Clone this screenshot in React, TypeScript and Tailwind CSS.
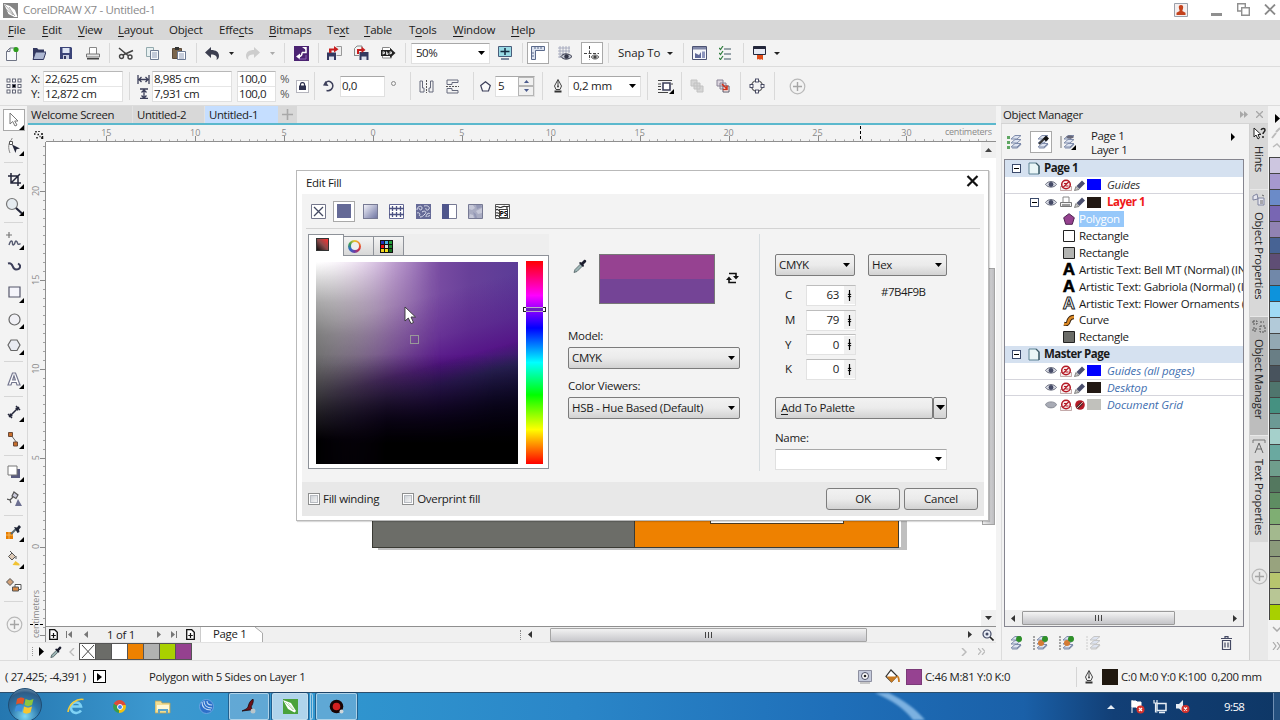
import React from "react";

type Kids = { children?: React.ReactNode };

/* ---------- small helpers ---------- */

function Svg({ w = 16, h = 16, vb, className = "", children }: { w?: number; h?: number; vb?: string; className?: string } & Kids) {
  return (
    <svg width={w} height={h} viewBox={vb ?? `0 0 ${w} ${h}`} className={`block shrink-0 ${className}`} fill="none">
      {children}
    </svg>
  );
}

function Slot({ w, children }: { w: string } & Kids) {
  return <div className={`flex h-full shrink-0 items-center justify-center ${w}`}>{children}</div>;
}

function VSep({ w, h = "h-[28px]" }: { w: string; h?: string }) {
  return (
    <Slot w={w}>
      <div className={`w-px bg-[#d9d9d9] ${h}`} />
    </Slot>
  );
}

function Down({ className = "text-black" }: { className?: string }) {
  return (
    <Svg w={7} h={4} className={className}>
      <path d="M0 0h7L3.5 4z" fill="currentColor" />
    </Svg>
  );
}

function Corner() {
  return (
    <Svg w={5} h={5} className="absolute bottom-0 right-0">
      <path d="M5 0v5H0z" fill="#000" />
    </Svg>
  );
}

const INK = "#3c3f5a";

/* ---------- title and menu ---------- */

function TitleBar() {
  return (
    <div className="flex h-5 shrink-0 items-center bg-white">
      <Svg w={15} h={15} className="ml-[3px]">
        <path d="M0 0h15v15H0z" fill="#858585" />
        <path d="M1 1l6 2 5 4 2.500 7-3 0-6-3z" fill="#fff" />
        <path d="M2 2l10 11M6 4l5 8M3 6l7 6" stroke="#9a9a9a" strokeWidth=".8" />
      </Svg>
      <span className="ml-[5px] text-[11.5px] tracking-[-0.33px] text-[#8b8b8b]">CorelDRAW X7 - Untitled-1</span>
      <div className="ml-auto flex items-center">
        <Svg w={14} h={14}>
          <path d="M.5.5h13v13H.5z" fill="#f4eeee" stroke="#9aa0ab" />
          <path d="M7 2c2 0 2.600 1.500 2 3.500L8.300 8l3.200 1.700V12h-9V9.700L5.700 8 5 5.500C4.400 3.500 5 2 7 2z" fill="#c4421d" />
        </Svg>
        <Svg w={11} h={14} className="ml-[23px]">
          <path d="M0 10h11v3H0z" fill="#8f8f8f" />
        </Svg>
        <Svg w={13} h={13} className="ml-[15px] -mt-[2px]">
          <path d="M4 8H.7V.7h7.600V4" stroke="#8f8f8f" strokeWidth="1.400" />
          <path d="M4.700 4.700h7.600v7.600H4.700z" stroke="#8f8f8f" strokeWidth="1.400" />
        </Svg>
        <Svg w={12} h={11} className="ml-[14px] mr-[4px] -mt-[2px]">
          <path d="M1 .5l10 10M11 .5l-10 10" stroke="#8a8a8a" strokeWidth="1.800" />
        </Svg>
      </div>
    </div>
  );
}

const MENUS: [string, string, string, string][] = [
  ["", "F", "ile", "w-[34px]"],
  ["", "E", "dit", "w-[36px]"],
  ["", "V", "iew", "w-[40px]"],
  ["", "L", "ayout", "w-[51px]"],
  ["Ob", "j", "ect", "w-[50px]"],
  ["Effe", "c", "ts", "w-[50px]"],
  ["", "B", "itmaps", "w-[58px]"],
  ["Te", "x", "t", "w-[37px]"],
  ["", "T", "able", "w-[45px]"],
  ["T", "o", "ols", "w-[44px]"],
  ["", "W", "indow", "w-[58px]"],
  ["", "H", "elp", "w-[40px]"],
];

function MenuBar() {
  return (
    <div className="flex h-5 shrink-0 items-center bg-[#d7d7d7] pl-[8px] text-[11.5px] tracking-[-0.2px]">
      {MENUS.map(([a, u, b, w]) => (
        <div key={a + u + b} className={`shrink-0 ${w}`}>
          {a}
          <span className="underline underline-offset-2">{u}</span>
          {b}
        </div>
      ))}
    </div>
  );
}

/* ---------- standard toolbar ---------- */

function FloppyWith({ out }: { out?: boolean }) {
  return (
    <Svg w={17} h={16}>
      {out ? (
        <>
          <path d="M7.500 7h9v8h-9z" fill="#33385f" />
          <path d="M9.500 11.500h5V15h-5z" fill="#dfe3ee" />
          <path d="M2.500 10V3.500L5 1h5v3M2 10.500h5" stroke="#888" />
          <path d="M5 4h4.500V1.500L13.500 5 9.500 8V6H7v3H5z" fill="#c81e1e" />
        </>
      ) : (
        <>
          <path d="M1 7.500h9V15H1z" fill="#33385f" />
          <path d="M3 11.500h5V15H3z" fill="#dfe3ee" />
          <path d="M10.500 1.500h5v9h-5" stroke="#999" fill="#eee" />
          <path d="M3 8V3.500h5V1l4.500 3.200L8 7.500v-2H5.500V8z" fill="#c81e1e" />
        </>
      )}
    </Svg>
  );
}

function StandardBar() {
  return (
    <div className="flex h-[27px] shrink-0 items-center border-b border-[#dcdcdc] bg-[#f3f3f3]">
      <Slot w="w-[25px]">
        <Svg w={13} h={15}>
          <path d="M.5 5.500L4 2h6.500v12.500H.5z" fill="#f7f8fb" stroke="#6f7485" />
          <path d="M.5 5.500H4V2" stroke="#6f7485" />
          <circle cx="10" cy="3.500" r="2.600" fill="#2f9e1f" />
        </Svg>
      </Slot>
      <Slot w="w-[28px]">
        <Svg w={14} h={13}>
          <path d="M1 12V1h4l1.500 1.500H12V5" fill="#33385f" />
          <path d="M1 12.500L3.500 5H14l-2.500 7.500z" fill="#aeb8d2" stroke="#33385f" />
        </Svg>
      </Slot>
      <Slot w="w-[26px]">
        <Svg w={12} h={12}>
          <path d="M0 0h11l1 1v11H0z" fill="#3b4478" />
          <path d="M2.500 1h7v5h-7z" fill="#dfe6f5" />
          <path d="M3 8h6v4H3z" fill="#c9cfe2" />
          <path d="M4 9h2v3H4z" fill="#33385f" />
        </Svg>
      </Slot>
      <Slot w="w-[27px]">
        <Svg w={14} h={13}>
          <path d="M3.500 7V.5h7V7" fill="#fff" stroke="#888" />
          <path d="M.5 7h13v3H.5z" fill="#e6e6e6" stroke="#777" />
          <path d="M1 11h12v1.500H1z" fill="#444" />
        </Svg>
      </Slot>
      <VSep w="w-[6px]" h="h-[20px]" />
      <Slot w="w-[27px]">
        <Svg w={16} h={13}>
          <path d="M1 1l9 7.500M15 3.500L5 8" stroke="#444" strokeWidth="1.600" />
          <circle cx="3.500" cy="9.500" r="2" stroke="#444" strokeWidth="1.400" />
          <circle cx="12" cy="10" r="2" stroke="#444" strokeWidth="1.400" />
        </Svg>
      </Slot>
      <Slot w="w-[26px]">
        <Svg w={13} h={13}>
          <path d="M.5.5h7v9h-7z" fill="#e7f0f1" stroke="#93a9ad" />
          <path d="M4.500 3.500h8v9h-8z" fill="#f4f7fb" stroke="#6d7a92" />
          <path d="M6 6h5M6 8h5M6 10h5" stroke="#8d9ab5" />
        </Svg>
      </Slot>
      <Slot w="w-[28px]">
        <Svg w={14} h={13}>
          <path d="M.5 1.500h9v10h-9z" fill="#7a654c" stroke="#5a4a3a" />
          <path d="M3 0h4v3H3z" fill="#333" />
          <path d="M5.500 4.500h8v8h-8z" fill="#fff" stroke="#6d7a92" />
          <path d="M7 7h5M7 9h5M7 11h5" stroke="#8d9ab5" />
        </Svg>
      </Slot>
      <VSep w="w-[6px]" h="h-[20px]" />
      <Slot w="w-[27px]">
        <Svg w={15} h={13}>
          <path d="M6 0v3c5 0 8 2 8 6 0 2-1 3-2.500 4 1-3 0-5.500-5.500-5.500V11L0 5.500z" fill="#3c3f50" />
        </Svg>
      </Slot>
      <Slot w="w-[10px]"><Svg w={5} h={3}><path d="M0 0h5L2.500 3z" fill="#222" /></Svg></Slot>
      <Slot w="w-[32px]">
        <Svg w={15} h={13}>
          <path d="M9 0v3C4 3 1 5 1 9c0 2 1 3 2.500 4C2.500 10 3.500 7.500 9 7.500V11l6-5.500z" fill="#cdcdcd" />
        </Svg>
      </Slot>
      <Slot w="w-[9px]"><Svg w={5} h={3}><path d="M0 0h5L2.500 3z" fill="#aaa" /></Svg></Slot>
      <VSep w="w-[14px]" h="h-[20px]" />
      <Slot w="w-[20px]">
        <Svg w={15} h={15}>
          <path d="M0 0h15v15H0z" fill="#4b2372" />
          <path d="M12 1v5.500H8M8 6.500c0 3-1 4-3 4" stroke="#fff" strokeWidth="1.500" />
          <path d="M2 10.500l4-3v6zM8 1l4 0v3z" fill="#fff" />
          <path d="M12 9v4H5" stroke="#8d63b5" />
        </Svg>
      </Slot>
      <VSep w="w-[14px]" h="h-[20px]" />
      <Slot w="w-[19px]"><FloppyWith /></Slot>
      <Slot w="w-[33px]"><FloppyWith out /></Slot>
      <Slot w="w-[22px]">
        <Svg w={16} h={14}>
          <path d="M2.500 12V1.500h7l2 2V12z" fill="#fff" stroke="#888" />
          <path d="M1 4h9V2l5.500 5L10 12v-2H1z" fill="#222" />
          <path d="M3 5.500v3M3 6h1.500v1.500H3M6.500 5.500v3M6.500 7h1.500v1.500H6.500M10 5.500v3M10 6h1.500v1.500H10" stroke="#fff" strokeWidth=".8" />
        </Svg>
      </Slot>
      <VSep w="w-[12px]" h="h-[20px]" />
      <div className="flex h-[21px] w-[79px] shrink-0 items-center border border-[#e0e0e0] border-t-[#a8a8a8] bg-white pl-[4px] text-[11.500px] tracking-[-0.5px]">
        50%
        <Down className="ml-auto mr-[4px] text-black" />
      </div>
      <Slot w="w-[29px]">
        <Svg w={14} h={14}>
          <path d="M.5.5h13v10H.5z" fill="#9adbe6" stroke="#4a5c7a" />
          <path d="M7 2v7M2.500 5.500h9" stroke="#14293f" strokeWidth="1.500" />
          <path d="M3 13h8" stroke="#4a5c7a" strokeWidth="1.400" />
        </Svg>
      </Slot>
      <VSep w="w-[6px]" h="h-[20px]" />
      <Slot w="w-[26px]">
        <div className="flex h-[22px] w-[22px] items-center justify-center border border-[#a9a9a9] bg-white">
          <Svg w={14} h={14}>
            <path d="M.5.5h13v4h-9v9h-4z" fill="#dce3f0" stroke="#5b6a8c" />
            <path d="M4 1v2M7 1v2M10 1v2M1 7h2M1 10h2" stroke="#5b6a8c" />
          </Svg>
        </div>
      </Slot>
      <Slot w="w-[28px]">
        <Svg w={16} h={15}>
          <path d="M1 2h12M1 5h12M1 8h8M1 11h4M3 0v12M6 0v9M9 0v8M12 0v7" stroke="#9aa0b5" strokeWidth=".8" />
          <path d="M4 10.500c2-3.500 8-3.500 11 0-3 3.500-9 3.500-11 0z" fill="#bfc3cf" stroke="#333648" />
          <circle cx="9.500" cy="10.500" r="2.200" fill="#333648" />
        </Svg>
      </Slot>
      <Slot w="w-[26px]">
        <div className="flex h-[22px] w-[22px] items-center justify-center border border-[#a9a9a9] bg-white">
          <Svg w={16} h={15}>
            <path d="M0 7.500h15M5.500 0v14" stroke="#444" strokeDasharray="3 1.500" />
            <path d="M7 11c2-2.800 6-2.800 8 0-2 2.800-6 2.800-8 0z" fill="#bbb" stroke="#555" strokeWidth=".8" />
            <circle cx="11" cy="11" r="1.600" fill="#444" />
          </Svg>
        </div>
      </Slot>
      <VSep w="w-[6px]" h="h-[20px]" />
      <div className="w-[50px] shrink-0 whitespace-nowrap pl-[7px] text-[11.500px] tracking-[-0.1px]">Snap To</div>
      <Slot w="w-[17px]"><Svg w={6} h={3}><path d="M0 0h6L3 3z" fill="#222" /></Svg></Slot>
      <VSep w="w-[10px]" h="h-[20px]" />
      <Slot w="w-[22px]">
        <Svg w={15} h={14}>
          <path d="M.5.5h14v13H.5z" fill="#f6f7fb" stroke="#4c5273" />
          <path d="M1 1h13v2.500H1z" fill="#8087a8" />
          <path d="M3 12V7l4 2 2-3v6z" fill="#5f6899" /><path d="M10 5.500h3V12h-3z" fill="#8d95bd" />
        </Svg>
      </Slot>
      <Slot w="w-[29px]">
        <Svg w={12} h={14}>
          <path d="M0 2l1.500 1.500L4 0M0 7l1.500 1.500L4 5M0 12l1.500 1.500L4 10" stroke="#2f7d3c" strokeWidth="1.200" />
          <path d="M5 3h7M5 8h7M5 13h7" stroke="#7b8a93" strokeWidth="1.500" />
        </Svg>
      </Slot>
      <VSep w="w-[8px]" h="h-[20px]" />
      <Slot w="w-[24px]">
        <Svg w={13} h={14}>
          <path d="M.5.5h12v8H.5z" fill="#e6e9f3" stroke="#23263a" />
          <path d="M.5.5h12V3H.5z" fill="#23263a" />
          <path d="M4 9h6v5l-2-1-1 1-1-1-2 .5z" fill="#df4b18" />
        </Svg>
      </Slot>
      <Slot w="w-[12px]"><Svg w={6} h={3}><path d="M0 0h6L3 3z" fill="#222" /></Svg></Slot>
    </div>
  );
}

/* ---------- property bar ---------- */

function Pair({ w, a, b }: { w: string; a: string; b: string }) {
  return (
    <div className={`flex h-[31px] shrink-0 flex-col border border-[#e0e0e0] border-t-[#b8b8b8] bg-white text-[11.500px] tracking-[-0.4px] ${w}`}>
      <div className="flex flex-1 items-center whitespace-nowrap border-b border-[#e6e6e6] pl-px">{a}</div>
      <div className="flex flex-1 items-center whitespace-nowrap pl-px">{b}</div>
    </div>
  );
}

function PropertyBar() {
  return (
    <div className="flex h-[39px] shrink-0 items-center border-b border-[#dcdcdc] bg-[#f3f3f3] text-[11.500px] tracking-[-0.35px]">
      <Slot w="w-[27px]">
        <Svg w={16} h={16}>
          {[1, 6.5, 12].map((x) => [1, 6.5, 12].map((y) => (
            <rect key={`${x}${y}`} x={x} y={y} width="3" height="3" fill={x === 6.5 && y === 6.5 ? "#000" : "#fff"} stroke="#55596b" strokeWidth=".9" />
          )))}
        </Svg>
      </Slot>
      <div className="flex h-[30px] w-[16px] shrink-0 flex-col pl-[4px]">
        <div className="flex flex-1 items-center">X:</div>
        <div className="flex flex-1 items-center">Y:</div>
      </div>
      <Pair w="w-[80px]" a="22,625 cm" b="12,872 cm" />
      <VSep w="w-[12px]" />
      <Slot w="w-[17px]">
        <Svg w={13} h={26} className="mr-[1px]">
          <path d="M1 2v9M12 2v9M2 6.500h9M4.500 4L2 6.500 4.500 9M8.500 4L11 6.500 8.500 9" stroke={INK} strokeWidth="1.300" />
          <path d="M3 16h8M3 25.500h8M7 17v8M4.500 19.500L7 17l2.500 2.500M4.500 22.500L7 25l2.500-2.500" stroke={INK} strokeWidth="1.300" />
        </Svg>
      </Slot>
      <Pair w="w-[80px]" a="8,985 cm" b="7,931 cm" />
      <div className="w-[5px]" />
      <Pair w="w-[39px]" a="100,0" b="100,0" />
      <div className="flex h-[30px] w-[17px] shrink-0 flex-col pl-[4px] text-[#555]">
        <div className="flex flex-1 items-center">%</div>
        <div className="flex flex-1 items-center">%</div>
      </div>
      <Slot w="w-[19px]">
        <div className="flex h-[13px] w-[13px] items-center justify-center border border-[#b5b5bd] bg-white">
          <Svg w={7} h={8}>
            <path d="M0 3.500h7V8H0z" fill="#2e3150" />
            <path d="M1.500 4V2.200C1.500 0 5.500 0 5.500 2.200V4" stroke="#2e3150" strokeWidth="1.200" />
          </Svg>
        </div>
      </Slot>
      <VSep w="w-[4px]" />
      <Slot w="w-[24px]">
        <Svg w={11} h={12}>
          <path d="M2.500 3C6-1 11 3 9.500 7.500 8.500 10 6 11 3.500 10.500" stroke={INK} strokeWidth="1.500" />
          <path d="M0 5.500L5.500 6 2.500 1z" fill={INK} />
        </Svg>
      </Slot>
      <div className="flex h-[21px] w-[45px] shrink-0 items-center border border-[#e0e0e0] border-t-[#a8a8a8] bg-white pl-px">0,0</div>
      <Slot w="w-[16px]"><div className="mb-[5px] h-[5px] w-[5px] rounded-full border border-[#888]" /></Slot>
      <VSep w="w-[18px]" />
      <Slot w="w-[14px]">
        <Svg w={15} h={13}>
          <path d="M7.500 0v13" stroke="#555" strokeDasharray="2 1" />
          <path d="M1 1v11h4V8H3.500V1zM14 1v11h-4V8h1.500V1z" stroke="#666a7c" />
        </Svg>
      </Slot>
      <Slot w="w-[38px]">
        <Svg w={13} h={15}>
          <path d="M0 7.500h13" stroke="#555" strokeDasharray="2 1" />
          <path d="M12 1H1v4.500h5V3.500h6zM12 14H1V9.500h5v2h6z" stroke="#666a7c" />
        </Svg>
      </Slot>
      <VSep w="w-[4px]" />
      <Slot w="w-[20px]">
        <Svg w={11} h={11}>
          <path d="M5.500.7l4.800 3.700-1.800 5.600H2.500L.7 4.400z" fill="#fafafa" stroke={INK} strokeWidth="1.200" />
        </Svg>
      </Slot>
      <div className="flex h-[21px] w-[40px] shrink-0 items-center border border-[#e0e0e0] border-t-[#a8a8a8] bg-white pl-[2px]">
        5
        <div className="ml-auto flex h-[19px] w-[16px] flex-col">
          {[0, 1].map((i) => (
            <div key={i} className="flex flex-1 items-center justify-center border border-[#b5b5b5] bg-[#f0f0f0]">
              <Svg w={5} h={3} className={i === 0 ? "rotate-180" : ""}><path d="M0 0h5L2.500 3z" fill="#4a5a8c" /></Svg>
            </div>
          ))}
        </div>
      </div>
      <VSep w="w-[15px]" />
      <Slot w="w-[16px]"><Nib /></Slot>
      <div className="ml-[2px] flex h-[21px] w-[73px] shrink-0 items-center border border-[#e0e0e0] border-t-[#a8a8a8] bg-white pl-[4px] tracking-[-0.25px]">
        0,2 mm
        <Down className="ml-auto mr-[4px] text-black" />
      </div>
      <VSep w="w-[12px]" />
      <Slot w="w-[25px]">
        <div className="relative">
          <Svg w={16} h={15}>
            <path d="M0 1.500h14M0 13.500h10M0 5h3M0 7.500h3M0 10.500h3M13 5h2" stroke="#444" />
            <path d="M5 4h7v7H5z" fill="#fff" stroke={INK} strokeWidth="1.600" />
          </Svg>
          <Corner />
        </div>
      </Slot>
      <VSep w="w-[7px]" />
      <Slot w="w-[24px]">
        <Svg w={14} h={14}>
          <path d="M1 1h6v6H1zM4 4h6v6H4zM7 7h6v6H7z" fill="#d6d6d6" stroke="#c2c2c2" />
        </Svg>
      </Slot>
      <Slot w="w-[28px]">
        <Svg w={14} h={14}>
          <path d="M1 1h6v6H1zM4 4h6v6H4z" fill="#ddd6e0" stroke="#8a8496" />
          <path d="M7 7h6v6H7z" fill="#fff" stroke="#5c5666" />
          <path d="M6 5l5 5M11 6.500v4H7" stroke="#d3321b" strokeWidth="1.600" />
        </Svg>
      </Slot>
      <VSep w="w-[7px]" />
      <Slot w="w-[25px]">
        <Svg w={16} h={16}>
          <circle cx="8" cy="8" r="5.500" stroke="#555" strokeWidth="1.200" />
          {[[8, 2.500], [13.500, 8], [8, 13.500], [2.500, 8]].map(([x, y]) => (
            <rect key={`${x}-${y}`} x={x - 1.500} y={y - 1.500} width="3" height="3" fill="#fff" stroke={INK} strokeWidth=".9" />
          ))}
        </Svg>
      </Slot>
      <VSep w="w-[10px]" />
      <Slot w="w-[36px]"><Plus /></Slot>
    </div>
  );
}

function Nib() {
  return (
    <Svg w={10} h={14}>
      <path d="M5 .5L8.500 7 7 10.500H3L1.500 7zM5 1v6" stroke="#444" />
      <circle cx="5" cy="7.500" r="1" fill="#444" />
      <path d="M1.500 11.500h7v2h-7z" fill="#333" />
    </Svg>
  );
}

function Plus() {
  return (
    <Svg w={17} h={17}>
      <circle cx="8.500" cy="8.500" r="7.300" stroke="#b9b9b9" strokeWidth="1.200" />
      <path d="M8.500 4v9M4 8.500h9" stroke="#a5a5a5" strokeWidth="1.400" />
    </Svg>
  );
}

/* ---------- toolbox ---------- */

function Tool({ h, corner = true, active, children }: { h: string; corner?: boolean; active?: boolean } & Kids) {
  return (
    <div className={`flex w-full shrink-0 items-center justify-center pl-px ${h}`}>
      <div className={`relative flex items-center justify-center ${active ? "h-[22px] w-[22px] border border-[#a9a9a9] bg-white" : "h-[20px] w-[20px]"}`}>
        {children}
        {corner && <Corner />}
      </div>
    </div>
  );
}

function HSep({ h }: { h: string }) {
  return (
    <div className={`flex w-full shrink-0 items-center pl-[4px] pr-[4px] ${h}`}>
      <div className="h-px w-full bg-[#d6d6d6]" />
    </div>
  );
}

function ToolBox() {
  return (
    <div className="flex w-[28px] shrink-0 flex-col border-r border-[#d8d8d8] bg-[#f3f3f3] pt-px">
      <Tool h="h-[25px]" active>
        <Svg w={10} h={15}><path d="M1 1v11l2.700-2.500L6 14l2-1-2.300-4H9z" fill="#fff" stroke="#777" /></Svg>
      </Tool>
      <Tool h="h-[28px]">
        <Svg w={14} h={16}>
          <path d="M5 0v1C1 5 1 10 3 15" stroke="#888" />
          <path d="M2.500 3.500h3v3h-3z" fill="#fff" stroke="#555" />
          <path d="M5 6.500l8 4-3.500.8L8.500 15z" fill="#23263a" />
        </Svg>
      </Tool>
      <HSep h="h-[5px]" />
      <Tool h="h-[28px]">
        <Svg w={15} h={15}><path d="M1 4h10v10M4 1v10h10M4 11l9-9" stroke="#23263a" strokeWidth="1.500" /></Svg>
      </Tool>
      <Tool h="h-[26px]">
        <Svg w={18} h={18}>
          <circle cx="7" cy="7" r="5.500" fill="#e5ebf0" stroke="#777" strokeWidth="1.200" />
          <path d="M11 11l6 5.500" stroke="#23263a" strokeWidth="2.200" />
        </Svg>
      </Tool>
      <HSep h="h-[6px]" />
      <Tool h="h-[30px]">
        <Svg w={16} h={16}>
          <path d="M3 0v6M0 3h6" stroke="#777" strokeWidth="1.200" />
          <path d="M3 13c2-6 3.500-4 3.500-1.500s2 1.500 2.500-1 2-1.500 2.500.5 2 1.500 3 .5" stroke="#555a70" strokeWidth="1.400" />
        </Svg>
      </Tool>
      <Tool h="h-[22px]" corner={false}>
        <Svg w={14} h={9}><path d="M1 1.500c6-1.500 3.500 6 8 6s5.500-4 2-6" stroke={INK} strokeWidth="2" /></Svg>
      </Tool>
      <Tool h="h-[31px]"><Svg w={13} h={13}><path d="M1 1h11v10H1z" fill="#f5f5fb" stroke="#55576b" strokeWidth="1.200" /></Svg></Tool>
      <Tool h="h-[22px]"><Svg w={13} h={13}><circle cx="6.500" cy="6.500" r="5.500" fill="#f0f0f5" stroke="#666" strokeWidth="1.200" /></Svg></Tool>
      <Tool h="h-[30px]"><Svg w={14} h={13}><path d="M4 1h6l3 5-3 5.500H4L1 6z" fill="#e9ebf2" stroke="#666" strokeWidth="1.200" /></Svg></Tool>
      <HSep h="h-[3px]" />
      <Tool h="h-[32px]">
        <Svg w={14} h={14}><path d="M1 13L5.500 1h3L13 13h-3l-.8-2.500H4.800L4 13zM5.700 8h2.600L7 3.800z" fill="#fff" stroke="#74778f" strokeWidth="1.200" /></Svg>
      </Tool>
      <HSep h="h-[3px]" />
      <Tool h="h-[28px]">
        <Svg w={14} h={14}><path d="M2 12L12 2M1 9l4 4M9 1l4 4" stroke="#23263a" strokeWidth="1.500" /><path d="M2 12l1-4 3 3zM12 2L8 3l3 3z" fill="#23263a" /></Svg>
      </Tool>
      <Tool h="h-[26px]">
        <Svg w={12} h={16}><path d="M3 4l6 8" stroke="#666" /><path d="M.5 1.500H4.500V5.500H.5zM5.500 11h4v4h-4z" fill="#c96f2b" stroke="#6a4a3a" /></Svg>
      </Tool>
      <HSep h="h-[6px]" />
      <Tool h="h-[28px]">
        <Svg w={14} h={14}><path d="M4 4h9v9H4z" fill="#5a5c80" /><path d="M1 1h9v9H1z" fill="#fff" stroke="#777" /></Svg>
      </Tool>
      <Tool h="h-[26px]" corner={false}>
        <Svg w={15} h={16}>
          <path d="M7 1l4 3-2 3.500L5 5z" fill="#ccd" stroke="#555" strokeWidth="1.200" />
          <path d="M6 6L3 9M0 8l3 1 1 3" stroke="#555" strokeWidth="1.200" />
          <path d="M11 8l4 7H8z" fill="#6c6f91" />
        </Svg>
      </Tool>
      <HSep h="h-[6px]" />
      <Tool h="h-[28px]">
        <Svg w={17} h={16} className="-ml-[2px]">
          <path d="M1 8h7v7H1z" fill="#e77d00" /><path d="M4 8v7M1 11h7" stroke="#f7b556" />
          <path d="M6 10l5-5" stroke="#5a6a70" strokeWidth="2" /><path d="M9 3l3 .5L14 1l2 2-2 2.500.5 2.500-2 1z" fill="#1f2536" />
        </Svg>
      </Tool>
      <Tool h="h-[26px]">
        <Svg w={15} h={16}>
          <path d="M5 2l3.500 3.500L5 9 1.500 5.500z" fill="#ddc9b6" stroke="#555" /><path d="M3 0l3 3M9 5v3" stroke="#555" /><path d="M5.500 14l3-4 4 3v1.500z" fill="#f1c232" />
        </Svg>
      </Tool>
      <Tool h="h-[26px]" corner={false}>
        <Svg w={16} h={16}>
          <path d="M4 1.500l3.500 3.500L4 8.500.5 5z" fill="#d1a078" stroke="#555" />
          <path d="M9 7.500h6v5H9z" fill="#fff" stroke="#555" /><path d="M6.500 10h6v4h-6z" fill="#d88a45" stroke="#555" />
        </Svg>
      </Tool>
      <HSep h="h-[6px]" />
      <Tool h="h-[40px]" corner={false}><Plus /></Tool>
    </div>
  );
}

/* ---------- rulers ---------- */

const UNIT = 8.89;

function HRuler() {
  const ticks = Array.from({ length: 107 }, (_, i) => i - 36);
  return (
    <Svg w={968} h={17} className="bg-[#f3f3f3]">
      <g>
        {ticks.map((n) => {
          const x = Math.round(345 + n * UNIT) + 0.5;
          if (x < 18 || x > 966) return null;
          const big = n % 10 === 0;
          return <path key={n} d={`M${x} ${big ? 11 : n % 2 === 0 ? 14 : 14.500}V16`} stroke={big ? "#8a8a8a" : "#a8a8a8"} />;
        })}
        {[-15, -10, -5, 0, 5, 10, 15, 20, 25, 30].map((n) => (
          <text key={n} x={345 + n * 2 * UNIT} y="10.500" textAnchor="middle" fontSize="9" fill="#8a8a8a">{Math.abs(n)}</text>
        ))}
        <text x="917" y="10" fontSize="9" fill="#8a8a8a" textLength="47">centimeters</text>
      </g>
      <path d="M832.500 1v15" stroke="#000" strokeDasharray="3 2" />
      <path d="M18 16.500h950" stroke="#8f8f8f" />
      <path d="M8 6v1.500M11 6v1M6 9h1.500M13 9h2M9.500 9.500h1.500M9 12v1.500M13 13h2M14.500 11v3M11.500 11.500h1" stroke="#111" strokeWidth="1.500" />
    </Svg>
  );
}

function VRuler() {
  const ticks = Array.from({ length: 60 }, (_, i) => i - 11);
  return (
    <Svg w={18} h={500} className="bg-[#f3f3f3]">
      {ticks.map((n) => {
        const y = Math.round(404.500 - n * UNIT) + 0.5;
        if (y < 0 || y > 498) return null;
        const big = n % 10 === 0;
        return <path key={n} d={`M${big ? 12 : 15} ${y}H17`} stroke={big ? "#8a8a8a" : "#a0a0a0"} />;
      })}
      {[0, 5, 10, 15, 20].map((n) => (
        <text key={n} transform={`translate(11 ${404.500 - n * 2 * UNIT}) rotate(-90)`} textAnchor="middle" fontSize="9" fill="#8a8a8a">{n}</text>
      ))}
      <text transform="translate(11 496) rotate(-90)" fontSize="9" fill="#8a8a8a" textLength="48">centimeters</text>
      <path d="M17.500 0v500" stroke="#8f8f8f" />
      <path d="M2 482.500h14" stroke="#000" strokeDasharray="3 2" />
    </Svg>
  );
}

/* ---------- document area ---------- */

function DocTabs() {
  return (
    <div className="flex h-[17px] shrink-0 items-stretch bg-[#e8e8e8] text-[11.400px] tracking-[-0.35px]">
      <div className="flex w-[105px] items-center border-r border-[#e2e2e2] bg-[#d8d8d8] pl-[3px]">Welcome Screen</div>
      <div className="flex w-[72px] items-center border-r border-[#e2e2e2] bg-[#d8d8d8] pl-[4px]">Untitled-2</div>
      <div className="flex w-[73px] items-center bg-[#c5deff] pl-[4px]">Untitled-1</div>
      <div className="flex w-[19px] items-center justify-center bg-[#d8d8d8]">
        <Svg w={11} h={11}><path d="M5.500 0v11M0 5.500h11" stroke="#a8a8a8" strokeWidth="1.600" /></Svg>
      </div>
    </div>
  );
}

function Arrow({ className = "" }: { className?: string }) {
  return (
    <Svg w={4} h={7} className={className}>
      <path d="M0 0l4 3.500L0 7z" fill="currentColor" />
    </Svg>
  );
}

function PageNav() {
  const addPage = (
    <Svg w={9} h={11}>
      <path d="M.7.7h5l2.600 2.600v7H.7z" fill="#fff" stroke="#111" strokeWidth="1.300" />
      <path d="M4.500 4v5M2.300 6.500h4.500" stroke="#111" strokeWidth="1.200" />
    </Svg>
  );
  return (
    <div className="flex h-[16px] shrink-0 items-center border-t border-[#8f8f8f] bg-[#f0f0f0] text-[11.400px] tracking-[-0.3px]">
      <Slot w="w-[14px]">{addPage}</Slot>
      <Slot w="w-[18px]">
        <div className="flex items-center"><div className="h-[7px] w-px bg-[#777]" /><Arrow className="ml-px rotate-180 text-[#777]" /></div>
      </Slot>
      <Slot w="w-[16px]"><Arrow className="rotate-180 text-[#777]" /></Slot>
      <Slot w="w-[54px]">1 of 1</Slot>
      <Slot w="w-[22px]"><Arrow className="text-[#777]" /></Slot>
      <Slot w="w-[8px]">
        <div className="flex items-center"><Arrow className="text-[#777]" /><div className="ml-px h-[7px] w-px bg-[#777]" /></div>
      </Slot>
      <Slot w="w-[24px]">{addPage}</Slot>
      <div className="relative ml-[-2px] flex h-full w-[63px] shrink-0 items-center border-l border-[#ccc] bg-white pb-[2px] pl-[12px]">
        Page 1
        <Svg w={8} h={15} className="absolute right-0 top-0"><path d="M0 0l7.500 6v9H8V0z" fill="#f0f0f0" /><path d="M0 0l7.500 6v9" stroke="#aaa" /></Svg>
      </div>
      <div className="ml-auto flex h-full w-[479px] items-center">
        <Slot w="w-[6px]"><div className="h-[10px] border-l border-dotted border-[#888]" /></Slot>
        <Slot w="w-[14px]"><Arrow className="rotate-180 text-[#333]" /></Slot>
        <div className="ml-[13px] flex h-[14px] w-[317px] items-center justify-center rounded-[1px] border border-[#a5a5a5] bg-gradient-to-b from-[#f2f2f2] to-[#c8c8cc]"><Grip /></div>
        <div className="ml-auto flex items-center">
          <Slot w="w-[18px]"><Arrow className="text-[#333]" /></Slot>
          <Slot w="w-[17px]">
            <Svg w={12} h={12}>
              <circle cx="5" cy="5" r="4" fill="#e8ecf5" stroke="#444b66" strokeWidth="1.200" /><circle cx="5" cy="5" r="1.500" fill="#444b66" />
              <path d="M8 8l3.500 3.500" stroke="#222" strokeWidth="1.600" />
            </Svg>
          </Slot>
        </div>
      </div>
    </div>
  );
}

function Grip() {
  return (
    <div className="flex gap-[2px]">
      <div className="h-[6px] w-px bg-[#444]" />
      <div className="h-[6px] w-px bg-[#444]" />
      <div className="h-[6px] w-px bg-[#444]" />
    </div>
  );
}

function Dropper() {
  return (
    <Svg w={14} h={14}>
      <path d="M1 13.500l1-3L7.500 5l2 2L4 12.500z" fill="#9cb5b5" stroke="#4f6062" strokeWidth=".8" />
      <path d="M6 4l1-1 1.500.5L11 1c1-1 3 .5 2 2l-2.500 2.500L11 7l-1 1z" fill="#1b1d2e" />
    </Svg>
  );
}

function DocPalette() {
  return (
    <div className="flex h-[18px] shrink-0 items-center border-t border-[#e2e2e2] bg-[#f3f3f3]">
      <Slot w="w-[8px]"><div className="h-[9px] w-0 border-l border-dotted border-[#999]" /></Slot>
      <Slot w="w-[11px]"><Svg w={5} h={9}><path d="M0 0l5 4.500L0 9z" fill="#000" /></Svg></Slot>
      <Slot w="w-[18px]"><Svg w={12} h={12} vb="0 0 14 14"><path d="M1 13.500l1-3L7.500 5l2 2L4 12.500z" fill="#9cb5b5" stroke="#4f6062" /><path d="M6 4l1-1 1.500.5L11 1c1-1 3 .5 2 2l-2.500 2.500L11 7l-1 1z" fill="#1b1d2e" /></Svg></Slot>
      <Slot w="w-[14px]"><Svg w={6} h={8}><path d="M5 0L1 4l4 4" stroke="#bbb" strokeWidth="1.300" /></Svg></Slot>
      <div className="flex h-[17px] w-[113px] items-stretch divide-x divide-[#555] border border-[#555]">
        <div className="flex-1 bg-white"><Svg w={15} h={15}><path d="M2 1l12 13M14 1L2 14" stroke="#333" strokeWidth=".9" /></Svg></div>
        <div className="flex-1 bg-[#6b6c68]" />
        <div className="flex-1 bg-white" />
        <div className="flex-1 bg-[#ee8100]" />
        <div className="flex-1 bg-[#b1b2b1]" />
        <div className="flex-1 bg-[#a9d000]" />
        <div className="flex-1 bg-[#95418f]" />
      </div>
      <div className="ml-auto mr-[11px] flex items-center gap-[11px]">
        <Svg w={6} h={8}><path d="M1 0l4 4-4 4" stroke="#bbb" strokeWidth="1.500" /></Svg>
        <Svg w={7} h={7}><path d="M0 0l3 3.500L0 7M4 0l3 3.500L4 7" stroke="#bbb" strokeWidth="1.200" /></Svg>
      </div>
    </div>
  );
}

function Canvas() {
  return (
    <div className="flex h-[484px] shrink-0">
      <div className="relative flex-1 overflow-hidden bg-white">
        <div className="absolute left-[332px] top-[100px] h-[308px] w-[529px] bg-[#bfbfbf]" />
        <div className="absolute left-[852px] top-[90px] h-[315px] w-[3px] bg-white" />
        <div className="absolute left-[326px] top-[90px] flex h-[316px] w-[527px] border border-[#3a3a34]">
          <div className="w-[262px] border-r border-[#3a3a34] bg-[#6c6d68]" />
          <div className="flex-1 bg-[#ee8100]" />
        </div>
        <div className="absolute left-[664px] top-[340px] h-[42px] w-[134px] border border-[#4d3a20] bg-white" />
      </div>
      <div className="flex w-[16px] shrink-0 flex-col items-center bg-white">
        <div className="flex h-[16px] w-[15px] items-center justify-center bg-[#f0f0f0]"><Svg w={7} h={4}><path d="M0 4h7L3.500 0z" fill="#444" /></Svg></div>
        <div className="mt-[110px] h-[257px] w-[13px] border border-[#a3a3a3] bg-gradient-to-r from-[#eee] to-[#bdbdc0]" />
        <div className="mt-auto flex h-[16px] w-[15px] items-center justify-center bg-[#f0f0f0]"><Svg w={7} h={4}><path d="M0 0h7L3.500 4z" fill="#333" /></Svg></div>
      </div>
    </div>
  );
}

/* ---------- dialog ---------- */

function Select({ w, text }: { w: string; text: string }) {
  return (
    <div className={`flex h-[22px] shrink-0 items-center whitespace-nowrap rounded-[2px] border border-[#7b7b7b] bg-gradient-to-b from-[#f2f2f2] via-[#ebebeb] to-[#d2d2d2] pl-[3px] ${w}`}>
      {text}
      <Down className="ml-auto mr-[4px] text-black" />
    </div>
  );
}

function ColorField() {
  return (
    <div className="relative h-[202px] w-[202px] bg-[linear-gradient(to_right,#f3e4f3_0%,#cda9d8_16%,#a273bb_36%,#7d4fa4_56%,#684099_76%,#5b3c97_100%)]">
      <div className="absolute inset-0 bg-[linear-gradient(165deg,rgba(84,18,134,0)_25%,rgba(84,18,134,.45)_42%,rgba(84,18,134,.95)_53%)]" />
      <div className="absolute inset-0 bg-[linear-gradient(165deg,rgba(40,38,86,0)_52%,rgba(40,38,86,.9)_61%,rgba(22,18,58,.95)_72%,rgba(8,5,24,1)_86%,#000_95%)] [mask-image:linear-gradient(to_right,rgba(0,0,0,.3),rgba(0,0,0,.55)_50%,#000_88%)]" />
      <div className="absolute inset-0 bg-[linear-gradient(to_bottom,#fff_0%,#dadada_8%,#a8a8a8_20%,#7c7c7c_36%,#6b6b6b_50%,#4c4c4c_66%,#222_80%,#000_88%)] [mask-image:linear-gradient(to_right,#000_0%,rgba(0,0,0,.72)_18%,rgba(0,0,0,.3)_40%,transparent_62%)]" />
      <div className="absolute inset-0 bg-[linear-gradient(to_bottom,transparent_46%,rgba(4,0,12,.4)_62%,rgba(3,0,10,.85)_78%,#000_90%)] [mask-image:linear-gradient(to_right,rgba(0,0,0,.5),#000_35%)]" />
      <div className="absolute left-[94px] top-[73px] h-[9px] w-[9px] border border-[#999]" />
      <Svg w={12} h={18} className="absolute left-[88px] top-[44px]">
        <path d="M1 1v14l3.300-3L7 17.500l2.500-1L7 11h4.500z" fill="#fff" stroke="#333" strokeWidth=".9" />
      </Svg>
    </div>
  );
}

function FillTypes() {
  const box = "flex h-[21px] w-[22px] items-center justify-center";
  return (
    <div className="flex h-[34px] shrink-0 items-center gap-[4.300px] pl-[5px]">
      <div className={box}><Svg w={15} h={15}><path d="M.5.500h14v14H.5z" fill="#fff" stroke="#74778c" /><path d="M3 3l9 9M12 3l-9 9" stroke="#444a63" strokeWidth="1.300" /></Svg></div>
      <div className={`${box} border border-[#a9a9a9] bg-white`}><Svg w={14} h={14}><path d="M0 0h14v14H0z" fill="#656a97" /></Svg></div>
      <div className={box}><div className="h-[15px] w-[15px] border border-[#777a94] bg-gradient-to-br from-[#f1f1f8] to-[#7277a3]" /></div>
      <div className={box}>
        <Svg w={15} h={15}><path d="M.5.500h14v14H.5z" fill="#fff" stroke="#656a97" /><path d="M0 4.500h15M0 10.500h15M3.500 2v5M7.500 2v5M11.500 2v5M3.500 8v5M7.500 8v5M11.500 8v5" stroke="#4c5283" strokeWidth="1.300" /></Svg>
      </div>
      <div className={box}>
        <Svg w={15} h={15}><path d="M0 0h15v15H0z" fill="#656a97" /><path d="M1 6c0-4 5-5 5-2S3 6 3 4M8 2c4-1 6 1 5 3s-4 1-3-1M6 8c3-2 5 0 3 2s-3 3-5 3M1 9c2-1 4 1 2 3M10 13c0-3 3-5 4-3M12 13c0-1 1-2 2-1" stroke="#dfe2f0" strokeWidth="1" /></Svg>
      </div>
      <div className={box}><Svg w={15} h={15}><path d="M.5.500h14v14H.5z" fill="#fff" stroke="#777a94" /><path d="M0 0h7v15H0z" fill="#4f568c" /></Svg></div>
      <div className={box}>
        <Svg w={15} h={15}><path d="M.5.500h14v14H.5z" fill="#a9acc2" stroke="#777a94" /><path d="M1 1h4l2 3-3 2-3-1zM8 7l6-3v5l-4 1zM2 10l3 1 1 3H1z" fill="#c6c8d8" /><path d="M8 1h5l1 2-5 2zM5 8l3 2 1 4H7z" fill="#9397b5" /></Svg>
      </div>
      <div className={box}>
        <div className="relative flex h-[15px] w-[15px] items-center justify-center">
          <Svg w={15} h={15}><path d="M.5.500h14v14H.5z" fill="#fff" stroke="#555" /><path d="M1 3c2-2 3 2 6 0s4 1 7-1M1 6c2-2 3 2 4 0M1 9c2-1 2 1 3 0M1 12c2-2 2 1 4 0M12 3v3" stroke="#333" strokeWidth="1.200" /></Svg>
          <span className="absolute left-[4px] top-[5px] border border-[#444] bg-white text-[7px] font-bold leading-[7px] tracking-[-0.2px] text-black">PS</span>
        </div>
      </div>
    </div>
  );
}

function PickerPanel() {
  const tab = "flex h-[19px] items-center justify-center border border-b-0 border-[#8e9299] bg-gradient-to-b from-[#f4f4f4] to-[#d8d8d8]";
  return (
    <div className="flex w-[241px] shrink-0 flex-col bg-[#eeeeee]">
      <div className="flex h-[21px] items-end">
        <div className="z-10 -mb-px flex h-[22px] w-[36px] items-center border border-b-0 border-[#8e9299] bg-white pb-[3px] pl-[7px]">
          <div className="h-[13px] w-[13px] border border-[#333] bg-[linear-gradient(to_top_right,#111,#8b4a4a_50%,#ff3030)]" />
        </div>
        <div className={`${tab} w-[30px] border-l-0 pr-[8px]`}>
          <div className="flex h-[13px] w-[13px] items-center justify-center rounded-full bg-[conic-gradient(#e6c72e,#ef7a2a,#d62c3e,#6c3fa5,#2b67c9,#3d9e52,#e6c72e)]">
            <div className="h-[8px] w-[8px] rounded-full bg-[#eee]" />
          </div>
        </div>
        <div className={`${tab} w-[30px] border-l-0 pr-[5px]`}>
          <Svg w={13} h={13}>
            <path d="M0 0h13v13H0z" fill="#111" />
            <path d="M1 1h3v3H1z" fill="#2431b8" /><path d="M5 1h3v3H5z" fill="#42b2e9" /><path d="M9 1h3v3H9z" fill="#25a13b" />
            <path d="M1 5h3v3H1z" fill="#e11" /><path d="M5 5h3v3H5z" fill="#ddd" /><path d="M9 5h3v3H9z" fill="#1d8c2f" />
            <path d="M1 9h3v3H1z" fill="#f3d31c" /><path d="M5 9h3v3H5z" fill="#f3e31c" /><path d="M9 9h3v3H9z" fill="#16751f" />
          </Svg>
        </div>
      </div>
      <div className="flex h-[214px] border border-[#8e9299] bg-white pl-[7px] pt-[6px]">
        <ColorField />
        <div className="relative -mt-px ml-[8px] h-[203px] w-[17px] bg-[linear-gradient(to_bottom,#f00,#f0f_17%,#00f_33%,#0ff_50%,#0f0_66%,#ff0_83%,#f00)]">
          <div className="absolute -left-[3px] top-[46px] flex h-[5px] w-[23px] items-center border-x border-[#222]">
            <div className="h-full w-[2px] border-y border-[#222] bg-white" />
            <div className="h-full flex-1 border-y border-[#b9a8c9] bg-[#6a1fc0]" />
            <div className="h-full w-[2px] border-y border-[#222] bg-white" />
          </div>
        </div>
      </div>
    </div>
  );
}

function Channel({ name, value }: { name: string; value: string }) {
  return (
    <div className="flex h-[24.700px] items-center pl-[10px]">
      <span className="w-[21px]">{name}</span>
      <div className="flex h-[21px] w-[50px] items-center justify-end border border-[#e2e2e2] border-t-[#bdbdbd] bg-white">
        {value}
        <div className="ml-[5px] flex h-[18px] w-[11px] items-center justify-center bg-[#f0f0f0]">
          <Svg w={5} h={11}><path d="M2.500 0v11" stroke="#000" strokeWidth="1.200" /><path d="M.5 6h4L2.500 8z" fill="#000" /><path d="M.5 5h4L2.500 3z" fill="#000" /></Svg>
        </div>
      </div>
    </div>
  );
}

function Check({ label }: { label: string }) {
  return (
    <div className="flex items-center">
      <div className="h-[12px] w-[12px] border border-[#8e8f8f] bg-white p-[1px]">
        <div className="h-full w-full border border-[#b8bcc2] bg-gradient-to-br from-[#cfd3d8] to-[#f4f4f4]" />
      </div>
      <span className="ml-[3px]">{label}</span>
    </div>
  );
}

function Button({ w, children }: { w: string } & Kids) {
  return (
    <div className={`flex h-[22px] items-center justify-center rounded-[3px] border border-[#7d7d7d] bg-gradient-to-b from-[#f2f2f2] via-[#ebebeb] to-[#d2d2d2] ${w}`}>{children}</div>
  );
}

function EditFill() {
  return (
    <div className="absolute left-[296px] top-[170px] flex h-[351px] w-[693px] flex-col border border-[#b9b9b9] bg-white pb-[4px] pl-[5px] pr-[4px] text-[11.500px] tracking-[-0.3px] text-[#1b1b1b] shadow-[1px_1px_1px_rgba(0,0,0,0.15)]">
      <div className="flex h-[23px] shrink-0 items-center pl-[4px]">
        Edit Fill
        <Svg w={13} h={12} className="ml-auto mr-[5px] -mt-[3px]"><path d="M1.500 1l10 10M11.500 1l-10 10" stroke="#111" strokeWidth="2.200" /></Svg>
      </div>
      <div className="flex flex-1 flex-col bg-[#f3f3f3]">
        <FillTypes />
        <div className="ml-[4px] mr-[4px] h-px bg-[#d3d3d3]" />
        <div className="flex flex-1 pt-[5px]">
          <div className="ml-[6px]"><PickerPanel /></div>
          <div className="ml-[19px] flex w-[172px] flex-col pt-[20px]">
            <div className="flex h-[50px] items-start">
              <div className="mt-[5px] pl-[5px]"><Dropper /></div>
              <div className="ml-[12px] h-[50px] w-[116px] border border-[#777] bg-gradient-to-b from-[#964291] from-50% to-[#744496] to-50%" />
              <Svg w={13} h={12} className="ml-[11px] mt-[18px]">
                <path d="M3 1.500h7v3M10 10.500H3v-3" stroke="#111" strokeWidth="1.600" />
                <path d="M7 4h6l-3 3.500zM0 8h6L3 4.500z" fill="#111" />
              </Svg>
            </div>
            <div className="mt-[24px] h-[16px] leading-[16px]">Model:</div>
            <div className="mt-[3px]"><Select w="w-[172px]" text="CMYK" /></div>
            <div className="mt-[9px] h-[16px] leading-[16px]">Color Viewers:</div>
            <div className="mt-[3px]"><Select w="w-[172px]" text="HSB - Hue Based (Default)" /></div>
          </div>
          <div className="ml-[19px] h-[237px] w-px bg-[#d7dde0]" />
          <div className="ml-[15px] flex w-[172px] flex-col pt-[20px]">
            <div className="flex justify-between">
              <Select w="w-[80px]" text="CMYK" />
              <Select w="w-[79px]" text="Hex" />
            </div>
            <div className="mt-[7px] flex">
              <div className="w-[92px]">
                <Channel name="C" value="63" />
                <Channel name="M" value="79" />
                <Channel name="Y" value="0" />
                <Channel name="K" value="0" />
              </div>
              <div className="mt-[1px] pl-[14px] leading-[16px] tracking-[-0.5px]">#7B4F9B</div>
            </div>
            <div className="mt-[15px] flex">
              <div className="flex h-[22px] w-[158px] items-center rounded-[2px] border border-[#7b7b7b] bg-gradient-to-b from-[#f2f2f2] via-[#ebebeb] to-[#d2d2d2] pl-[5px]">
                <span className="underline underline-offset-2">A</span>dd To Palette
              </div>
              <div className="flex h-[22px] w-[14px] items-center justify-center rounded-[2px] border border-[#7b7b7b] bg-gradient-to-b from-[#f2f2f2] to-[#d2d2d2]">
                <Svg w={9} h={5}><path d="M0 0h9L4.500 5z" fill="#000" /></Svg>
              </div>
            </div>
            <div className="mt-[11px] h-[16px] leading-[16px]">Name:</div>
            <div className="mt-[3px] flex h-[21px] w-[172px] items-center justify-end border border-[#e0e0e0] border-t-[#a8a8a8] bg-white pr-[4px]"><Down /></div>
          </div>
        </div>
        <div className="flex h-[34px] shrink-0 items-center bg-[#e8e8e8] pl-[6px] pr-[6px]">
          <Check label="Fill winding" />
          <div className="w-[23px]" />
          <Check label="Overprint fill" />
          <div className="ml-auto flex gap-[4px]">
            <Button w="w-[74px]">OK</Button>
            <Button w="w-[74px]">Cancel</Button>
          </div>
        </div>
      </div>
    </div>
  );
}

/* ---------- object manager ---------- */

function Eye({ shut }: { shut?: boolean }) {
  return shut ? (
    <Svg w={12} h={8}><path d="M.5 3.500C2 0 10 0 11.500 3.500 10 8 2 8 .5 3.500z" fill="#a8abb5" stroke="#777b86" strokeWidth=".8" /></Svg>
  ) : (
    <Svg w={12} h={9}>
      <path d="M.5 4.500C3 .5 9 .5 11.500 4.500 9 8 3 8 .5 4.500z" fill="#d5d8e2" stroke="#6c7080" />
      <circle cx="6" cy="4.500" r="2.400" fill="#454a66" />
    </Svg>
  );
}

function Ban() {
  return (
    <Svg w={12} h={12}>
      <path d="M.5 7.500h11v4H.5z" fill="#f4f0f0" stroke="#a88" strokeWidth=".7" />
      <circle cx="6" cy="5.500" r="4.300" fill="#f8eaea" stroke="#b51a26" strokeWidth="1.500" />
      <path d="M3 8.500l6-6M4 4.500h3M5.500 7h3" stroke="#b51a26" strokeWidth="1.100" />
    </Svg>
  );
}

function Pencil({ off }: { off?: boolean }) {
  return (
    <Svg w={12} h={12}>
      {off ? (
        <><circle cx="6" cy="6" r="4.800" fill="#b51a26" /><path d="M3 9l5-5" stroke="#433" strokeWidth="3" /><path d="M3 9l6-6" stroke="#e8a0a0" /></>
      ) : (
        <><path d="M4 8.500l5.500-5.500" stroke="#4b4f6e" strokeWidth="4.200" /><path d="M.5 11.500l1.500-4 3 3z" fill="#ccc" stroke="#444" strokeWidth=".6" /></>
      )}
    </Svg>
  );
}

function Minus() {
  return (
    <div className="flex h-[9px] w-[9px] shrink-0 items-center justify-center border border-[#3b4a6b] bg-white">
      <div className="h-px w-[5px] bg-black" />
    </div>
  );
}

function PageHead({ name }: { name: string }) {
  return (
    <div className="flex h-[16.900px] shrink-0 items-center bg-[#d5e1f0] pl-[7px] font-bold tracking-[-0.5px]">
      <Minus />
      <Svg w={12} h={13} className="ml-[7px] mr-[4px]"><path d="M1 1h7l3 3v8H1z" fill="#eaf6f8" stroke="#5c8294" /><path d="M8 1l3 3v8" stroke="#3c5a66" strokeWidth="1.300" /></Svg>
      {name}
    </div>
  );
}

function LayerRow({ name, swatch, text, line = true, tree, printer, gridRow }: { name: string; swatch: string; text: string; line?: boolean; tree?: boolean; printer?: boolean; gridRow?: boolean }) {
  return (
    <div className={`flex h-[16.900px] shrink-0 items-center whitespace-nowrap ${line ? "border-b border-[#d5d5dc]" : ""}`}>
      <div className="flex w-[39px] items-center pl-[25px]">{tree && <Minus />}</div>
      <div className="flex w-[14px] justify-center"><Eye shut={gridRow} /></div>
      <div className="flex w-[15px] justify-center">
        {printer ? (
          <Svg w={12} h={12}><path d="M3 6V1h6v5" stroke="#888" fill="#fff" /><path d="M.5 6.500h11v4H.5z" fill="#f2f2f2" stroke="#777" /><path d="M2 9h8" stroke="#444" /></Svg>
        ) : <Ban />}
      </div>
      <div className="flex w-[14px] justify-center"><Pencil off={gridRow} /></div>
      <div className={`h-[11px] w-[14px] ${swatch}`} />
      <span className={`ml-[6px] ${text}`}>{name}</span>
    </div>
  );
}

function ItemRow({ icon, name, selected }: { icon: React.ReactNode; name: string; selected?: boolean }) {
  return (
    <div className="flex h-[16.900px] shrink-0 items-center whitespace-nowrap">
      <div className="ml-[56px] flex w-[16px] shrink-0 justify-center">{icon}</div>
      <span className={`ml-[2px] leading-[16px] ${selected ? "bg-[#96c8fa] pr-[4px] text-white" : ""}`}>{name}</span>
    </div>
  );
}

function LetterA({ outline }: { outline?: boolean }) {
  return (
    <span className={`font-['Liberation_Sans'] text-[17px] font-bold leading-none tracking-normal ${outline ? "text-white [-webkit-text-stroke:1px_#222]" : "text-black [-webkit-text-stroke:0.6px_#000]"}`}>A</span>
  );
}

function Layers({ className = "", tint = "#7f8cab", children }: { className?: string; tint?: string } & Kids) {
  return (
    <Svg w={17} h={16} className={className}>
      {[0, 4, 8].map((y) => (
        <path key={y} d={`M5 ${y + 5}l4-3.500h6l-4 3.500z`} fill="#dde3f0" stroke={tint} />
      ))}
      <path d="M6 14h5l4-4" stroke={tint} strokeWidth="1.200" />
      {children}
    </Svg>
  );
}

function Rect({ fill }: { fill: string }) {
  return <Svg w={12} h={12}><path d="M.500.500h11v11H.5z" fill={fill} stroke="#222" /></Svg>;
}

function ObjectManager() {
  return (
    <div className="flex w-[248px] shrink-0 flex-col border-l border-[#dcdcdc] bg-[#f3f3f3]">
      <div className="flex h-[35px] shrink-0 items-center pl-[3px]">
        <Layers className="ml-[1px]"><path d="M1 2h3v3H1zM1 7h3v3H1zM1 12h3v3H1z" fill="#5fa763" /></Layers>
        <div className="ml-[7px] flex h-[22px] w-[22px] items-center justify-center border border-[#a9a9a9] bg-white">
          <Layers><path d="M6 10l5-5" stroke="#333" strokeWidth="2" /><path d="M13 1.500l3 3-3 3-3-3z" fill="#111" /></Layers>
        </div>
        <div className="relative ml-[7px]"><Layers><path d="M2 2v12" stroke="#777" /><path d="M7 3c2-2 6-2 8 0-2 2-6 2-8 0z" fill="#667" /></Layers><Corner /></div>
        <div className="ml-[15px] mt-[2px] flex flex-col leading-[14px] tracking-[-0.35px]">
          <span>Page 1</span><span>Layer 1</span>
        </div>
        <Svg w={4} h={8} className="mb-[9px] ml-auto mr-[14px]"><path d="M0 0l4 4-4 4z" fill="#000" /></Svg>
      </div>
      <div className="ml-[2px] flex h-[468px] w-[240px] shrink-0 flex-col overflow-hidden border border-[#85858f] bg-white tracking-[-0.270px] text-[#1a1a1a]">
        <PageHead name="Page 1" />
        <LayerRow name="Guides" swatch="bg-[#0000ff]" text="italic text-[#333]" />
        <LayerRow name="Layer 1" swatch="bg-[#221813]" text="font-bold text-[#f01818] tracking-[-0.5px]" line={false} tree printer />
        <ItemRow selected name="Polygon" icon={<Svg w={12} h={12}><path d="M6 .7l5.300 4-2 6.600H2.700l-2-6.600z" fill="#95418f" stroke="#4d2450" /></Svg>} />
        <ItemRow name="Rectangle" icon={<Rect fill="#fff" />} />
        <ItemRow name="Rectangle" icon={<Rect fill="#b3b4b2" />} />
        <ItemRow name="Artistic Text: Bell MT (Normal) (IN" icon={<LetterA />} />
        <ItemRow name="Artistic Text: Gabriola (Normal) (I" icon={<LetterA />} />
        <ItemRow name="Artistic Text: Flower Ornaments (" icon={<LetterA outline />} />
        <ItemRow name="Curve" icon={<Svg w={14} h={12}><path d="M2 10c5 1 4-2 5-4s2-3 5-3" stroke="#3a2410" strokeWidth="4.500" /><path d="M2 10c5 1 4-2 5-4s2-3 5-3" stroke="#dc8a26" strokeWidth="2.500" /></Svg>} />
        <ItemRow name="Rectangle" icon={<Rect fill="#6b6c68" />} />
        <PageHead name="Master Page" />
        <LayerRow name="Guides (all pages)" swatch="bg-[#0000ff]" text="italic text-[#3f6fb0] tracking-[-0.1px]" />
        <LayerRow name="Desktop" swatch="bg-[#221813]" text="italic text-[#3f6fb0] tracking-[-0.1px]" />
        <LayerRow name="Document Grid" swatch="bg-[#c1c1bc]" text="italic text-[#3f6fb0] tracking-[-0.1px]" line={false} gridRow />
        <div className="mt-auto flex h-[16px] shrink-0 items-center bg-[#efefef]">
          <Slot w="w-[16px]"><Arrow className="rotate-180 text-[#333]" /></Slot>
          <div className="ml-[1px] flex h-[14px] w-[153px] items-center justify-center rounded-[1px] border border-[#9a9a9a] bg-gradient-to-b from-[#f4f4f4] to-[#c4c4c8]"><Grip /></div>
          <Arrow className="ml-auto mr-[6px] text-[#333]" />
        </div>
      </div>
      <div className="flex h-[31px] items-center pl-[4px]">
        <Layers><circle cx="13" cy="4" r="3" fill="#2f9129" /></Layers>
        <Layers className="ml-[9px]"><path d="M2 1v14" stroke="#555" strokeDasharray="2 1" /><circle cx="9" cy="8" r="3" fill="#d57b35" /><circle cx="13" cy="4" r="3" fill="#2f9129" /></Layers>
        <Layers className="ml-[9px]"><path d="M2 1v14" stroke="#555" strokeDasharray="2 1" /><circle cx="9" cy="8" r="3" fill="#d57b35" /><circle cx="13" cy="4" r="3" fill="#2f9129" /></Layers>
        <Layers className="ml-[10px]" tint="#c6c6c6"><path d="M2 1v14" stroke="#ccc" strokeDasharray="2 1" /></Layers>
        <Svg w={11} h={14} className="ml-auto mr-[17px]">
          <path d="M0 2.500h11M4 2V.6h3V2" stroke="#444963" strokeWidth="1.200" /><path d="M1.500 4.500h8v9h-8zM4 6.500v5M7 6.500v5" stroke="#444963" strokeWidth="1.200" />
        </Svg>
      </div>
    </div>
  );
}

function SideTab({ h, active, label, icon, pad }: { h: string; active?: boolean; label: string; icon: React.ReactNode; pad: string }) {
  return (
    <div className={`flex w-full shrink-0 flex-col items-center border-b border-[#e8e8e8] ${h} ${active ? "bg-[#bdbdbd]" : "bg-[#d8d8d8]"}`}>
      <div className="mt-[3px] h-[16px]">{icon}</div>
      <span className={`whitespace-nowrap text-[11.200px] leading-[16px] tracking-[-0.220px] text-[#222] [writing-mode:vertical-rl] ${pad}`}>{label}</span>
    </div>
  );
}

function SideTabs() {
  const sheet = (
    <Svg w={14} h={14}><path d="M1 3l4-2 1 5-5 1zM6 5h6v7H6z" fill="#e6e6ef" stroke="#8085a0" /><path d="M8 8h3M8 10h3M10 2l2 1" stroke="#666" /></Svg>
  );
  return (
    <div className="flex w-[19px] shrink-0 flex-col items-center border-l border-[#d0d0d0] bg-[#e9e9e9]">
      <SideTab h="h-[66px]" label="Hints" pad="mt-[3px]" icon={<Svg w={15} h={14}><path d="M2 1v9l2-2 2 4 1.500-1L6 7.500h3z" fill="#fff" stroke="#222" /><path d="M9 3c1-2 4-2 4 0s-2 2-2 4M11 9v2" stroke="#222" strokeWidth="1.500" /></Svg>} />
      <SideTab h="h-[127px]" label="Object Properties" pad="mt-[3px]" icon={sheet} />
      <SideTab h="h-[119px]" active label="Object Manager" pad="mt-[3px]" icon={<Svg w={14} h={14}><path d="M1 1h4v3H1zM1 8h3v3H1zM8 2h4M8 6h5v6H8z" stroke="#555" strokeDasharray="2 1" /></Svg>} />
      <SideTab h="h-[107px]" label="Text Properties" pad="mt-[4px]" icon={<Svg w={14} h={15}><path d="M1 1h12v3M1 1v3" stroke="#777" /><path d="M7 4l-4 10M7 4l4 10M5 10h5" stroke="#666" /></Svg>} />
      <div className="mt-[25px]"><Plus /></div>
    </div>
  );
}

const SWATCHES = [
  "bg-[#cdc6e0]", "bg-[#a698cf]", "bg-[#6b8bc8]", "bg-[#7866b3]", "bg-[#9183b2]", "bg-[#476394]", "bg-[#5f4e75]", "bg-[#7188a9]",
  "bg-[#0d93dc]", "bg-[#a0daf5]", "bg-[#b2cad9]", "bg-[#93a8b3]", "bg-[#697e85]", "bg-[#48535d]", "bg-[#4f756d]", "bg-[#459181]",
  "bg-[#6c9a95]", "bg-[#a5d0cb]", "bg-[#6aa9a0]", "bg-[#6f9e8c]", "bg-[#54785f]", "bg-[#5e8d62]", "bg-[#7fae73]", "bg-[#a3b98e]",
  "bg-[#8b9b7b]", "bg-[#98a37e]", "bg-[#b7c56e]", "bg-[#b8c695]", "bg-[#a8d000]",
];

function Palette() {
  return (
    <div className="flex w-[12px] shrink-0 flex-col items-end overflow-hidden bg-[#f3f3f3]">
      <div className="flex h-[51px] w-full flex-col items-end">
        <Svg w={6} h={9} className="mt-[8px]"><path d="M1 0l5 4.500L1 9z" fill="#000" /></Svg>
        <Svg w={9} h={12} className="mt-[4px]"><path d="M1 11l4-5M5 5l4-4" stroke="#bbb" strokeWidth="2" /></Svg>
        <Svg w={8} h={5} className="mt-[4px]"><path d="M1 4l4-3 4 4" stroke="#bbb" strokeWidth="1.500" /></Svg>
      </div>
      <div className="flex h-[463px] w-[11px] shrink-0 flex-col divide-y divide-[#444] border-l border-t border-[#444]">
        {SWATCHES.map((c) => <div key={c} className={`flex-1 ${c}`} />)}
      </div>
      <Svg w={8} h={6} className="mt-[6px]"><path d="M1 1l4 4 4-4" stroke="#aaa" strokeWidth="1.500" /></Svg>
      <Svg w={8} h={8} className="mt-[10px]"><path d="M1 0l3 4-3 4M5 0l3 4-3 4" stroke="#aaa" strokeWidth="1.200" /></Svg>
    </div>
  );
}

/* ---------- status and taskbar ---------- */

function StatusBar() {
  return (
    <div className="flex h-[32px] shrink-0 items-center border-t border-[#dcdcdc] bg-[#f3f3f3] pl-[5px] text-[11.400px] tracking-[-0.330px]">
      <span className="w-[88px] whitespace-nowrap">( 27,425; -4,391 )</span>
      <div className="flex h-[13px] w-[13px] items-center justify-center border border-black bg-white"><Svg w={5} h={8}><path d="M0 0l5 4-5 4z" fill="#000" /></Svg></div>
      <span className="ml-[43px]">Polygon with 5 Sides on Layer 1</span>
      <div className="ml-auto flex w-[422px] items-center">
        <Svg w={14} h={14}><path d="M.5.500h13v11H.5z" fill="#c5cbdc" stroke="#8d8fa0" /><circle cx="7" cy="6" r="3.500" fill="#fff" stroke="#4b4f66" /><circle cx="7" cy="6" r="1.300" fill="#222" /><path d="M2 13h10" stroke="#999" /></Svg>
        <Svg w={15} h={15} className="ml-[13px]"><path d="M6 1l6 6-5.500 6L1 7.500z" fill="#fff" stroke="#333" strokeWidth="1.200" /><path d="M1.500 7.500h11l-6 6z" fill="#c97a20" /><path d="M12 7c2 1 2 4 2 6" stroke="#c97a20" strokeWidth="1.800" /></Svg>
        <div className="ml-[6px] h-[16px] w-[16px] border border-[#7b3a78] bg-[#964291]" />
        <span className="ml-[3px] w-[102px] whitespace-nowrap">C:46 M:81 Y:0 K:0</span>
        <div className="ml-[49px] h-[20px] w-px bg-[#d5d5d5]" />
        <div className="ml-[7px]"><Nib /></div>
        <div className="ml-[8px] h-[16px] w-[16px] bg-[#20180f]" />
        <span className="ml-[3px] whitespace-nowrap">C:0 M:0 Y:0 K:100&nbsp; 0,200 mm</span>
      </div>
    </div>
  );
}

function TaskBar() {
  const win = "flex h-[27px] items-center justify-center rounded-[2px] border border-[#d0e4f0]/70 shadow-[0_0_0_1px_rgba(20,60,100,0.6)]";
  return (
    <div className="relative flex h-[28px] shrink-0 items-center border-t border-[#2b4e6c] bg-[linear-gradient(to_right,#2577b0_0%,#3c98cf_12%,#3096cf_26%,#2a86c8_45%,#1f6fb9_65%,#1a60a8_80%,#123f76_87%,#0e3766_100%)]">
      <Svg w={60} h={27} className="absolute left-[870px] top-0 blur-[1px]">
        <path d="M5 0h14c14 7 26 15 36 27H43C35 16 22 7 5 0z" fill="#9cc9f0" opacity=".75" />
      </Svg>
      <div className="relative h-full w-[48px]">
        <div className="absolute -top-[5px] left-[8px] flex h-[34px] w-[34px] items-center justify-center rounded-full border border-[#1e4d74] bg-[radial-gradient(circle_at_50%_85%,#7ed8f4,#2c79ad_45%,#2e5c86_75%,#9fb7c8)]">
          <Svg w={20} h={20}>
            <path d="M2 4c3-2 5-2 7.500-.5L8 9.500C6 8 3.500 8 1 9.500z" fill="#e0542a" />
            <path d="M10.500 4c3 1.500 5 1.500 8 0L17 10c-3 1.500-5 1.500-7.500 0z" fill="#8cc63f" />
            <path d="M1 11c2.500-1.500 5-1.500 7 0L6.500 17C4 15.500 2 15.500-.5 17z" fill="#3f8fdc" />
            <path d="M9 11.500c3 1.500 5 1.500 8 0L15.500 17.500c-3 1.500-5 1.500-7.500 0z" fill="#f7c62f" />
          </Svg>
        </div>
      </div>
      <Slot w="w-[56px]">
        <Svg w={18} h={17}>
          <path d="M14 12.500c-3 4-10 3-10-3s9-7 10-1H4.500" stroke="#7fd2f5" strokeWidth="2.600" />
          <path d="M1 14C2 6 10 0 16.500 1.500" stroke="#f2cb3d" strokeWidth="1.600" />
        </Svg>
      </Slot>
      <Slot w="w-[31px]">
        <div className="flex h-[13px] w-[13px] items-center justify-center rounded-full bg-[conic-gradient(#dd4b39_0_20%,#f4c20d_20%_52%,#3a9b4b_52%_82%,#dd4b39_82%)]">
          <div className="h-[6px] w-[6px] rounded-full border border-white bg-[#4285f4]" />
        </div>
      </Slot>
      <Slot w="w-[56px]">
        <Svg w={16} h={14}><path d="M0 1h6l1 2h8v10H0z" fill="#f1dd92" stroke="#b6a15a" strokeWidth=".8" /><path d="M2 5h12v5H2z" fill="#fff7d6" /><path d="M4 13v-3h8v3" stroke="#5ba3cc" strokeWidth="2" /></Svg>
      </Slot>
      <Slot w="w-[31px]">
        <Svg w={15} h={15}><circle cx="7.500" cy="7.500" r="7" fill="#2d6fc9" stroke="#6aa5e2" /><path d="M3 3c0 5 3 8 9 8M5 2c0 4 3 7 8 7M8 2c0 3 2 4 5 4" stroke="#c3dcf6" strokeWidth="1.100" /></Svg>
      </Slot>
      <div className={`${win} ml-[7px] w-[40px] bg-[#7fb4d8]/60`}>
        <Svg w={16} h={16}><path d="M12 0c1 3-1 6-2 8l3 5-4-2-8 1c4-2 5-2 6-4 1-4 2-6 5-8z" fill="#6e1018" stroke="#1d0508" strokeWidth=".8" /><circle cx="12" cy="12" r="2.500" fill="#b9c6cc" /></Svg>
      </div>
      <div className={`${win} ml-[3px] w-[36px] bg-[#cfe3f1]/80`}>
        <Svg w={15} h={15}><path d="M0 0h15v15H0z" fill="#4aa23a" /><path d="M0 1l8 3 5 8-1.500 1.500L5 10z" fill="#fff" /><path d="M2 3l8 8M5 4l6 7" stroke="#9bcf8c" strokeWidth=".7" /></Svg>
      </div>
      <div className="ml-[2px] h-[27px] w-[3px] rounded-r border border-[#d0e4f0]/70" />
      <div className={`${win} ml-[3px] w-[41px] bg-[#7fb4d8]/60`}>
        <Svg w={15} h={15}><circle cx="7.500" cy="7.500" r="6.800" fill="#180404" /><circle cx="7.500" cy="7.500" r="3.800" fill="#d32020" /><circle cx="12.500" cy="12.500" r="2" fill="#cfd6da" /></Svg>
      </div>
      <div className="ml-auto flex items-center">
        <Svg w={8} h={4}><path d="M0 4h8L4 0z" fill="#e8eef5" /></Svg>
        <Svg w={15} h={15} className="ml-[15px]"><path d="M2 1v13M2 2h4l1 1h4v6H7L6 8H2z" fill="#fff" stroke="#fff" /><circle cx="10.500" cy="10.500" r="4" fill="#d3322c" /><path d="M9 9l3 3M12 9l-3 3" stroke="#fff" strokeWidth="1.200" /></Svg>
        <Svg w={15} h={15} className="ml-[8px]"><path d="M4 4.500h9v7H4zM6 13.500h6" stroke="#e8eef5" strokeWidth="1.500" /><path d="M1 1v3h3V1M2.500 4v9h2" stroke="#e8eef5" strokeWidth="1.200" /></Svg>
        <Svg w={15} h={15} className="ml-[7px]"><path d="M1 5h3l4-4v12L4 9.500H1z" fill="#e8eef5" /><circle cx="10.500" cy="10" r="4" fill="#d3322c" /><path d="M9 8.500l3 3M12 8.500l-3 3" stroke="#fff" strokeWidth="1.200" /></Svg>
        <span className="ml-[34px] w-[21px] whitespace-nowrap text-[11.500px] tracking-[-0.600px] text-white">9:58</span>
        <div className="ml-[28px] h-[27px] w-[7px] border-l border-[#6f8fb3] bg-[#24507f]" />
      </div>
    </div>
  );
}

export default function App() {
  return (
    <div className="relative flex h-[720px] w-[1280px] flex-col overflow-hidden bg-[#f3f3f3] font-['Open_Sans','Noto_Sans',sans-serif] text-[11.500px] leading-[14px] text-[#1c1c1c]">
      <TitleBar />
      <MenuBar />
      <StandardBar />
      <PropertyBar />
      <div className="flex h-[554px] shrink-0">
        <ToolBox />
        <div className="flex w-[968px] shrink-0 flex-col">
          <DocTabs />
          <div className="h-[2px] shrink-0 bg-[#5bb8cd]" />
          <HRuler />
          <div className="flex shrink-0">
            <VRuler />
            <div className="flex min-w-0 flex-1 flex-col">
              <Canvas />
              <PageNav />
            </div>
          </div>
          <DocPalette />
        </div>
        <div className="flex w-[284px] shrink-0 pl-[5px]">
          <div className="flex w-[267px] shrink-0 flex-col">
            <div className="flex h-[18px] shrink-0 items-center border-b border-[#d4d4d4] bg-[#e4e4e4] pl-[2px] text-[11.400px] tracking-[-0.350px]">
              Object Manager
              <Svg w={8} h={7} className="ml-auto mr-[8px]"><path d="M0 0l4 3.500L0 7zM4 0l4 3.500L4 7z" fill="#a8a8a8" /></Svg>
              <Svg w={7} h={7} className="mr-[5px]"><path d="M0 0l7 7M7 0L0 7" stroke="#a8a8a8" strokeWidth="1.300" /></Svg>
            </div>
            <div className="flex flex-1">
              <ObjectManager />
              <SideTabs />
            </div>
          </div>
          <Palette />
        </div>
      </div>
      <StatusBar />
      <TaskBar />
      <EditFill />
    </div>
  );
}
